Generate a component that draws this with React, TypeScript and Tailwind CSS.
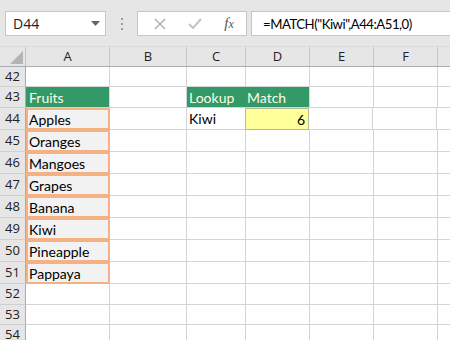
import React from "react";

const cols = [
  { k: "A", w: 84 },
  { k: "B", w: 77 },
  { k: "C", w: 59 },
  { k: "D", w: 64 },
  { k: "E", w: 64 },
  { k: "F", w: 64 },
  { k: "", w: 40 },
];

const fruits = ["Apples", "Oranges", "Mangoes", "Grapes", "Banana", "Kiwi", "Pineapple", "Pappaya"];

const rows = [42, 43, 44, 45, 46, 47, 48, 49, 50, 51, 52, 53, 54];
const rowH = (r: number) => (r === 42 ? 20 : r === 43 ? 21 : r <= 51 ? 22 : r === 52 ? 21 : 20);

const cellFont = { fontFamily: "Lato, 'Open Sans', sans-serif" };
const uiFont = { fontFamily: "'Open Sans', 'Noto Sans', sans-serif" };

function Cell({ r, c, w }: { r: number; c: string; w: number }) {
  const h = rowH(r);
  const base = "shrink-0 border-r border-b border-[#d4d4d4] bg-white text-[14px] text-black leading-none flex items-center overflow-hidden whitespace-nowrap";
  if (r === 43 && c === "A") {
    return (
      <div style={{ width: w, height: h, ...cellFont }} className="shrink-0 flex items-center bg-[#339966] text-[#fcfce8] text-[14px] pl-[3px] border-b border-[#d4d4d4]">
        <div className="flex-1">Fruits</div>
        <div className="w-px h-full bg-[#d4d4d4]" />
      </div>
    );
  }
  if (r === 43 && c === "C") {
    return (
      <div style={{ width: w, height: h, ...cellFont }} className="shrink-0 flex items-center bg-[#339966] text-[#fcfce8] text-[14px] pl-[2px] border-b border-[#d4d4d4]">
        Lookup
      </div>
    );
  }
  if (r === 43 && c === "D") {
    return (
      <div style={{ width: w, height: h, ...cellFont }} className="shrink-0 flex items-center bg-[#339966] text-[#fcfce8] text-[14px] pl-[1px] border-r border-b border-[#d4d4d4]">
        Match
      </div>
    );
  }
  if (r >= 44 && r <= 51 && c === "A") {
    return (
      <div style={{ width: w, height: h, ...cellFont }} className="shrink-0 flex bg-white">
        <div className="flex-1 h-full border-2 border-[#f4b183] bg-[#f2f2f2] flex items-center pl-[1px] text-[14px] text-black">
          {fruits[r - 44]}
        </div>
      </div>
    );
  }
  if (r === 44 && c === "C") {
    return (
      <div style={{ width: w, height: h, ...cellFont }} className={base + " pl-[2px]"}>
        Kiwi
      </div>
    );
  }
  if (r === 44 && c === "D") {
    return (
      <div style={{ width: w, height: h, ...cellFont }} className="shrink-0 flex items-center justify-end pr-[3px] bg-[#ffff99] border border-[#b8b8a0] text-[14px] text-black -ml-px">
        6
      </div>
    );
  }
  return <div style={{ width: w, height: h }} className={base} />;
}

export default function App() {
  return (
    <div className="w-[450px] h-[340px] overflow-hidden bg-white relative" style={uiFont}>
      {/* toolbar */}
      <div className="h-[47px] bg-[#e6e6e6] flex items-start pt-[11px] pl-[5px] border-b border-[#dadada]">
        <div className="w-[101px] h-[25px] bg-white border border-[#c6c6c6] flex items-center pl-[7px] pr-[5px]">
          <span className="text-[14px] text-[#222] flex-1" style={uiFont}>D44</span>
          <svg width="9" height="5" viewBox="0 0 9 5"><path d="M0 0 L9 0 L4.5 5 Z" fill="#666" /></svg>
        </div>
        <div className="w-[31px] h-[25px] flex flex-col items-center justify-center gap-[3px]">
          <div className="w-[2px] h-[2px] bg-[#9a9a9a]" />
          <div className="w-[2px] h-[2px] bg-[#9a9a9a]" />
          <div className="w-[2px] h-[2px] bg-[#9a9a9a]" />
        </div>
        <div className="w-[110px] h-[25px] bg-white border border-[#c6c6c6] flex items-center">
          <div className="w-[40px] flex justify-center pl-[3px]">
            <svg width="12" height="12" viewBox="0 0 12 12"><path d="M1 1 L11 11 M11 1 L1 11" stroke="#b4b4b4" strokeWidth="1.6" /></svg>
          </div>
          <div className="w-[34px] flex justify-center">
            <svg width="14" height="11" viewBox="0 0 14 11"><path d="M1 6 L5 10 L13 1" stroke="#c4c4c4" strokeWidth="2" fill="none" /></svg>
          </div>
          <div className="w-[34px] flex justify-center">
            <span className="text-[15px] italic text-[#555]" style={{ fontFamily: "'Liberation Serif', serif" }}>
              f<span className="text-[12px]">x</span>
            </span>
          </div>
        </div>
        <div className="w-[4px]" />
        <div className="flex-1 h-[25px] bg-white border border-[#c6c6c6] border-r-0 flex items-center pl-[11px] overflow-hidden">
          <span className="text-[14px] tracking-[-0.5px] text-black whitespace-nowrap origin-left scale-x-[0.94] inline-block" style={cellFont}>=MATCH("Kiwi",A44:A51,0)</span>
        </div>
      </div>
      {/* column headers */}
      <div className="flex h-[20px] bg-[#e6e6e6] border-b border-[#ababab]">
        <div className="w-[26px] shrink-0 h-full border-r border-[#c6c6c6] relative">
          <svg className="absolute right-[2px] bottom-[2px]" width="13" height="13" viewBox="0 0 13 13"><path d="M13 0 L13 13 L0 13 Z" fill="#b4b4b4" /></svg>
        </div>
        {cols.map((c, i) => (
          <div key={i} style={{ width: c.w }} className="shrink-0 h-full border-r border-[#c6c6c6] flex items-center justify-center text-[13px] text-[#222]">
            {c.k}
          </div>
        ))}
      </div>
      {rows.map((r) => (
        <div key={r} className="flex" style={{ height: rowH(r) }}>
          <div className="w-[26px] shrink-0 h-full bg-[#e6e6e6] border-r border-[#ababab] border-b border-b-[#d0d0d0] flex items-center justify-center text-[13px] text-[#222]">
            {r}
          </div>
          {cols.map((c, i) => (
            <Cell key={i} r={r} c={c.k} w={c.w} />
          ))}
        </div>
      ))}
    </div>
  );
}
